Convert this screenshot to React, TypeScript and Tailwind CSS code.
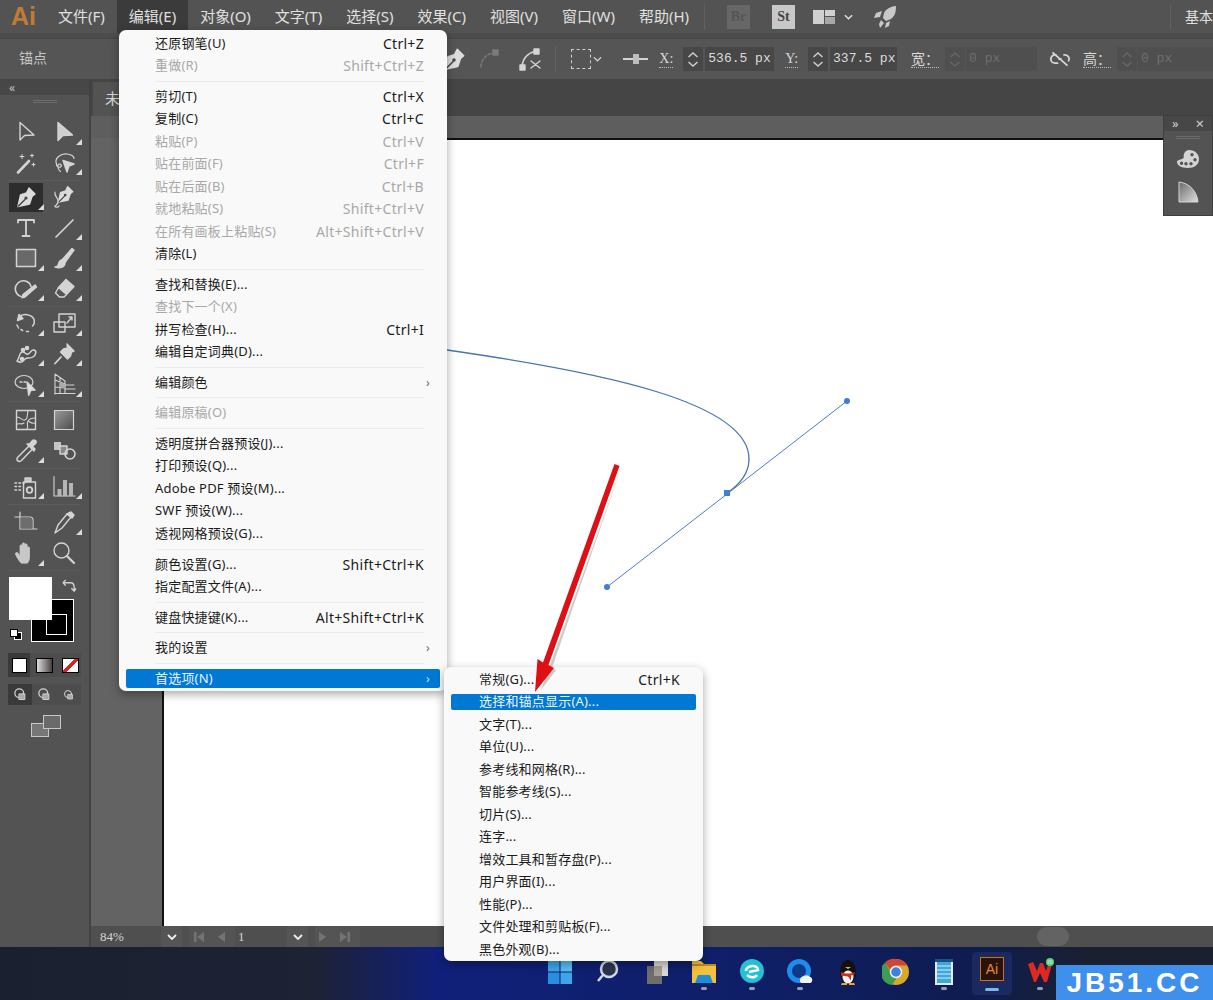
import { ReactNode } from "react";

const uiFont = "font-['Noto_Sans','Noto_Sans_CJK_SC',sans-serif]";

type MenuRow = { label: string; keys?: string; off?: boolean; more?: boolean; active?: boolean } | "sep";

const editMenu: MenuRow[] = [
  { label: "还原钢笔(U)", keys: "Ctrl+Z" },
  { label: "重做(R)", keys: "Shift+Ctrl+Z", off: true },
  "sep",
  { label: "剪切(T)", keys: "Ctrl+X" },
  { label: "复制(C)", keys: "Ctrl+C" },
  { label: "粘贴(P)", keys: "Ctrl+V", off: true },
  { label: "贴在前面(F)", keys: "Ctrl+F", off: true },
  { label: "贴在后面(B)", keys: "Ctrl+B", off: true },
  { label: "就地粘贴(S)", keys: "Shift+Ctrl+V", off: true },
  { label: "在所有画板上粘贴(S)", keys: "Alt+Shift+Ctrl+V", off: true },
  { label: "清除(L)" },
  "sep",
  { label: "查找和替换(E)..." },
  { label: "查找下一个(X)", off: true },
  { label: "拼写检查(H)...", keys: "Ctrl+I" },
  { label: "编辑自定词典(D)..." },
  "sep",
  { label: "编辑颜色", more: true },
  "sep",
  { label: "编辑原稿(O)", off: true },
  "sep",
  { label: "透明度拼合器预设(J)..." },
  { label: "打印预设(Q)..." },
  { label: "Adobe PDF 预设(M)..." },
  { label: "SWF 预设(W)..." },
  { label: "透视网格预设(G)..." },
  "sep",
  { label: "颜色设置(G)...", keys: "Shift+Ctrl+K" },
  { label: "指定配置文件(A)..." },
  "sep",
  { label: "键盘快捷键(K)...", keys: "Alt+Shift+Ctrl+K" },
  "sep",
  { label: "我的设置", more: true },
  "sep",
  { label: "首选项(N)", more: true, active: true },
];

const prefsMenu: MenuRow[] = [
  { label: "常规(G)...", keys: "Ctrl+K" },
  { label: "选择和锚点显示(A)...", active: true },
  { label: "文字(T)..." },
  { label: "单位(U)..." },
  { label: "参考线和网格(R)..." },
  { label: "智能参考线(S)..." },
  { label: "切片(S)..." },
  { label: "连字..." },
  { label: "增效工具和暂存盘(P)..." },
  { label: "用户界面(I)..." },
  { label: "性能(P)..." },
  { label: "文件处理和剪贴板(F)..." },
  { label: "黑色外观(B)..." },
];

const topMenu = ["文件(F)", "编辑(E)", "对象(O)", "文字(T)", "选择(S)", "效果(C)", "视图(V)", "窗口(W)", "帮助(H)"];

const Icon = ({ children, size = 24, className = "" }: { children: ReactNode; size?: number; className?: string }) => (
  <svg
    viewBox="0 0 24 24"
    width={size}
    height={size}
    fill="none"
    stroke="#d4d4d4"
    strokeWidth="1.4"
    strokeLinecap="round"
    strokeLinejoin="round"
    className={className}
  >
    {children}
  </svg>
);

const nib = (
  <>
    <path d="M15 3l6 6-3 2.5-2.5 7.5L4 21.5 6.5 10l6-2z" fill="#dcdcdc" stroke="#dcdcdc" />
    <path d="M4.5 21L11 14.5" stroke="#444" />
    <circle cx="12" cy="13" r="1.6" fill="#444" stroke="none" />
  </>
);

type Tool = { icon: ReactNode; more?: boolean; active?: boolean };

const toolGroups: Tool[][] = [
  [
    { icon: <path d="M6 2.5v17.5l4.5-4.5 9.5-.5z" /> },
    { icon: <path d="M6 2.5v18l5-5 9.5-.5z" fill="#cfcfcf" />, more: true },
    {
      icon: (
        <>
          <path d="M4 21.5L15 10" strokeWidth="2.6" />
          <path d="M8 3.5v4M6 5.500h4M18 3v3M16.500 4.500h3M19.500 12v3M18 13.500h3" strokeWidth="1.1" />
        </>
      ),
    },
    {
      icon: (
        <>
          <path d="M4.500 13C2 7 9 2.500 15 3c4 .3 7 2.500 7 4.500M4.500 13c-.5 3 3 4 4.500 2.500s-2-4-3-1c-.5 2 1 5 2.500 6" strokeWidth="1.2" />
          <path d="M11 9.500l11 3.500-5 2-2 6z" fill="#d4d4d4" />
        </>
      ),
      more: true,
    },
  ],
  [
    { icon: nib, more: true, active: true },
    {
      icon: (
        <>
          <g transform="translate(3 -1) scale(.85)">{nib}</g>
          <path d="M3 7c-1 5 3 5 3 9s-2 4-3 5 3 2 4 0" strokeWidth="1.2" />
        </>
      ),
    },
    { icon: <path d="M4 6.500V4h16v2.500M12 4v16M8.500 20h7" strokeWidth="1.8" />, more: false },
    { icon: <path d="M4 21L21 4" strokeWidth="1.7" />, more: true },
    { icon: <rect x="2.500" y="3.500" width="19" height="17" fill="#696969" strokeWidth="1.5" />, more: true },
    {
      icon: (
        <>
          <path d="M10 14L20 2.500l2 1.500-9 12.500z" fill="#d4d4d4" />
          <path d="M10 14c-3 0-3 3-4 5-.5 1.500-2 2-3 2 4 1.500 10 1 10-4.500z" fill="#d4d4d4" />
        </>
      ),
      more: true,
    },
    {
      icon: (
        <>
          <path d="M17 9.500A8 8 0 1 0 7 19.500" strokeWidth="1.6" />
          <path d="M9 17.500L21 8l1.500 2L11 20l-3 .8z" fill="#d4d4d4" />
        </>
      ),
      more: true,
    },
    {
      icon: (
        <>
          <path d="M14 2.500l8 7-7.500 8-8-7z" fill="#d4d4d4" />
          <path d="M6.500 10.500l8 7-2.500 2.500H7.500L3.500 16z" fill="#555" />
        </>
      ),
      more: true,
    },
  ],
  [
    {
      icon: (
        <>
          <path d="M5 6c4-4 13-3 15 2.500 .8 2.500 0 5-1.500 6.500" strokeWidth="1.5" />
          <path d="M3.500 9.500L5 3.500l4 4z" fill="#d4d4d4" />
          <path d="M3 14l1.500 3M7 18.500l2.500 1.500M12.500 20.500h3" strokeWidth="1.5" strokeDasharray="2 1" />
        </>
      ),
      more: true,
    },
    {
      icon: (
        <>
          <rect x="2" y="11" width="11" height="10" />
          <rect x="7" y="3" width="16" height="13" />
          <path d="M15 12l5-6M17 6h3v3" />
        </>
      ),
      more: true,
    },
    {
      icon: (
        <>
          <path d="M3 19c3-4 2-8 5-9s3 3 6 2 3-5 6-4 2 5-1 7-6 0-8 2-3 5-8 2z" strokeWidth="1.5" />
          <circle cx="9" cy="8" r="1.600" fill="#d4d4d4" />
          <circle cx="13" cy="6" r="1.600" fill="#d4d4d4" />
          <circle cx="8" cy="17" r="1.600" fill="#d4d4d4" />
        </>
      ),
      more: true,
    },
    {
      icon: (
        <>
          <path d="M15 2l7 7-2.500 1-1 4-3 3-7-7 3-3 4-1z" fill="#d4d4d4" />
          <path d="M9 15l-6 6.500" strokeWidth="1.8" />
        </>
      ),
      more: true,
    },
    {
      icon: (
        <>
          <ellipse cx="10" cy="10" rx="9" ry="6.500" strokeWidth="1.2" />
          <path d="M6 10h2M10 10h2" />
          <path d="M13 10l8 8-4 .3-2.300 5z" fill="#e0e0e0" />
        </>
      ),
      more: true,
    },
    {
      icon: (
        <>
          <path d="M3 2v20M3 2l10 7v12M3 8l10 4M3 15l10 1M8 5.500v16" strokeWidth="1.1" />
          <path d="M13 13h9M13 17h10M3 21.500h20" strokeWidth="1.1" />
          <path d="M8 10l5 2v4H8z" fill="#aaa" stroke="none" />
        </>
      ),
      more: true,
    },
  ],
  [
    {
      icon: (
        <>
          <rect x="2.500" y="2.500" width="19" height="19" />
          <path d="M3 9c4 0 5 4 8 3s2-6 3-9M21 10c-3 0-5 0-7 3s1 6-1 8M3 16c3-1 4 1 7-1M14 13c2 1 4 3 7 2" strokeWidth="1.1" />
        </>
      ),
    },
    {
      icon: (
        <>
          <defs>
            <linearGradient id="toolGrad" x1="0" y1="0" x2="1" y2="1">
              <stop offset="0" stopColor="#9a9a9a" />
              <stop offset="1" stopColor="#4c4c4c" />
            </linearGradient>
          </defs>
          <rect x="2.500" y="2.500" width="19" height="19" fill="url(#toolGrad)" strokeWidth="1.2" />
        </>
      ),
    },
    {
      icon: (
        <>
          <path d="M15 7L3.500 18.500c-1 1.200-.5 3 .5 3.500s2.500 .5 3.500-.5L18.500 10" strokeWidth="1.5" />
          <path d="M13 5l7 7 1-2-2.500-2.500L22 4c1-2-2-4-3.500-2.500L15.500 5z" fill="#d4d4d4" />
        </>
      ),
      more: true,
    },
    {
      icon: (
        <>
          <rect x="2" y="3" width="7" height="8" fill="#c4c4c4" stroke="none" />
          <rect x="8" y="7" width="7" height="8" fill="#888" />
          <circle cx="18" cy="15" r="5" strokeWidth="1.6" />
        </>
      ),
    },
  ],
  [
    {
      icon: (
        <>
          <path d="M1 8h1.500M5 8h1.500M1 11.500h1.500M5 11.500h1.500M1 15h1.500M5 15h1.500M9 8h1.500" strokeWidth="1.6" />
          <rect x="11" y="3" width="6" height="3.500" fill="#c4c4c4" />
          <rect x="9.500" y="7" width="12" height="16" />
          <circle cx="15.500" cy="15" r="2.800" strokeWidth="1.8" />
        </>
      ),
      more: true,
    },
    {
      icon: (
        <>
          <path d="M2 1.500V21h21" strokeWidth="1.1" />
          <rect x="5.500" y="14" width="4" height="7" fill="#b5b5b5" stroke="none" />
          <rect x="11" y="5" width="4" height="16" fill="#b5b5b5" stroke="none" />
          <rect x="17" y="8" width="4" height="13" fill="#b5b5b5" stroke="none" />
        </>
      ),
      more: true,
    },
  ],
  [
    {
      icon: (
        <>
          <path d="M6 1v17h17M1 6h15c2 0 3 1 3 3v9" strokeWidth="1.2" />
          <path d="M6.500 6.500H16c2 0 2.500 1 2.500 3v8h-12z" fill="#6d6d6d" stroke="none" />
        </>
      ),
    },
    {
      icon: (
        <>
          <path d="M15 3L6 14 3 22l7-5 9-11z" />
          <path d="M15 3l5 4 2-3-3-3z" fill="#d4d4d4" />
        </>
      ),
      more: true,
    },
    {
      icon: (
        <path
          d="M7 22c-2-2-5-7-5.500-9-.4-1.500 1.500-2 2.500-1l2 3V5c0-1.500 2.300-1.500 2.300 0v6V3c0-1.500 2.500-1.500 2.500 0v8V4c0-1.500 2.400-1.500 2.400 0v8-5c0-1.500 2.300-1.500 2.300 0v9c0 3-1 5-2 6z"
          fill="#c8c8c8"
          stroke="#c8c8c8"
          strokeWidth=".8"
        />
      ),
      more: true,
    },
    {
      icon: (
        <>
          <circle cx="9.500" cy="9.500" r="7.500" strokeWidth="1.4" />
          <path d="M15 15l7 7" strokeWidth="2.200" />
        </>
      ),
    },
  ],
];

const Corner = () => (
  <svg viewBox="0 0 6 6" className="absolute bottom-[3px] right-[1px] h-[6px] w-[6px]">
    <polygon points="6,0 6,6 0,6" fill="#dcdcdc" />
  </svg>
);

const ToolCell = ({ tool }: { tool: Tool }) => (
  <div className="relative flex h-[30.5px] items-center justify-center">
    {tool.active && <div className="absolute inset-x-[2px] inset-y-[1px] bg-[#2d2d2d]" />}
    <Icon className="relative">{tool.icon}</Icon>
    {tool.more && <Corner />}
  </div>
);

const Toolbar = () => (
  <div className="flex h-[867px] w-[91px] shrink-0 flex-col border-r-2 border-[#424242] bg-[#535353]">
    <div className="flex h-[15px] items-center bg-[#474747] pl-[9px] text-[12px] leading-none text-[#c0c0c0]">«</div>
    <div className="flex h-[22px] justify-center pt-[5px]">
      <div className="h-[3px] w-[24px] border-y border-[#6b6b6b]" />
    </div>
    {toolGroups.map((group, i) => (
      <div key={i}>
        <div className="grid grid-cols-[38px_38px] pl-[7px]">
          {group.map((tool, j) => (
            <ToolCell key={j} tool={tool} />
          ))}
        </div>
        <div className="mx-[8px] my-[1.5px] h-[1px] bg-[#5b5b5b]" />
        {i >= 2 && i <= 4 && <div className="h-[1.5px]" />}
      </div>
    ))}
    <div className="relative mt-[4.5px] h-[66px] shrink-0">
      <div className="absolute left-[31px] top-[22px] flex h-[43px] w-[43px] items-center justify-center border border-white bg-black">
        <div className="ml-[8px] mt-[8px] h-[21px] w-[21px] border border-white bg-black" />
      </div>
      <div className="absolute left-[9px] top-0 h-[43px] w-[43px] bg-white" />
      <svg viewBox="0 0 16 16" className="absolute left-[62px] top-[1px] h-[15px] w-[15px]" fill="none" stroke="#cfcfcf" strokeWidth="1.5">
        <path d="M2 5h7c3 0 4 2 4 5v3M1 5l3-3M1 5l3 3M10 11l3 3 2-3" />
      </svg>
      <div className="absolute left-[14px] top-[55px] h-[8px] w-[8px] border border-white bg-black" />
      <div className="absolute left-[10px] top-[52px] h-[8px] w-[8px] border border-black bg-white" />
    </div>
    <div className="mx-[8px] mt-[10px] flex h-[24px] items-center bg-[#4d4d4d]">
      <div className="flex h-[24px] w-[22px] items-center justify-center bg-[#3a3a3a]">
        <div className="h-[15px] w-[15px] border border-black bg-white" />
      </div>
      <div className="ml-[6px] h-[15px] w-[17px] border border-black bg-[linear-gradient(90deg,#ddd,#4a3f3f)]" />
      <div className="ml-[9px] h-[15px] w-[17px] border border-black bg-[linear-gradient(135deg,#fff_42%,#d22_42%,#d22_58%,#fff_58%)]" />
    </div>
    <div className="mx-[8px] mt-[7px] flex h-[21px] items-center bg-[#4d4d4d]">
      {[0, 1, 2].map((n) => (
        <div key={n} className={`flex h-[21px] w-[25px] items-center justify-center ${n === 0 ? "bg-[#3a3a3a]" : ""}`}>
          <Icon size={n === 2 ? 12 : 15}>
            <circle cx="10" cy="10" r="7" strokeWidth="2" />
            <rect x="10" y="11" width="9" height="9" fill="#aaa" strokeWidth="1.500" />
          </Icon>
        </div>
      ))}
    </div>
    <div className="relative ml-[31px] mt-[10px] h-[22px] w-[30px]">
      <div className="absolute bottom-0 left-0 h-[14px] w-[18px] border border-[#c8c8c8] bg-[#777]" />
      <div className="absolute right-0 top-0 h-[14px] w-[18px] border border-[#c8c8c8] bg-[#6a6a6a]" />
    </div>
  </div>
);

const Row = ({ row, highlight }: { row: Exclude<MenuRow, "sep">; highlight: string }) => (
  <div className={`relative flex h-[22.5px] items-center justify-between text-[13px] tracking-[0.2px] ${row.off ? "text-[#a8a8a8]" : "text-[#1b1b1b]"}`}>
    {row.active && <div className={`absolute rounded-[2px] bg-[#0078d4] ${highlight}`} />}
    <span className={`relative ${row.active ? "text-[#eaf3fb]" : ""}`}>{row.label}</span>
    {row.keys && <span className="relative text-[14px] tracking-[0.3px]">{row.keys}</span>}
    {row.more && <span className={`relative -mr-[6px] text-[12px] ${row.active ? "text-[#cde3f5]" : "text-[#666]"}`}>›</span>}
  </div>
);

const Menu = ({ rows, className, highlight }: { rows: MenuRow[]; className: string; highlight: string }) => (
  <div className={`absolute rounded-[7px] bg-[#f9f9f9] shadow-[0_3px_10px_rgba(0,0,0,0.35)] ${uiFont} ${className}`}>
    {rows.map((row, i) =>
      row === "sep" ? (
        <div key={i} className="flex h-[8.1px] items-center">
          <div className="-mr-[16px] h-[1px] w-full bg-[#ececec]" />
        </div>
      ) : (
        <Row key={i} row={row} highlight={highlight} />
      ),
    )}
  </div>
);

const Spinner = ({ dim = false }: { dim?: boolean }) => (
  <div className={`flex h-[24px] w-[20px] flex-col items-center justify-center gap-[3px] ${dim ? "bg-[#4f4f4f]" : "bg-[#474747]"}`}>
    <svg viewBox="0 0 12 6" className="h-[6px] w-[12px]" fill="none" stroke={dim ? "#666" : "#d0d0d0"} strokeWidth="1.4">
      <path d="M1.500 5L6 1l4.500 4" />
    </svg>
    <svg viewBox="0 0 12 6" className="h-[6px] w-[12px]" fill="none" stroke={dim ? "#666" : "#d0d0d0"} strokeWidth="1.4">
      <path d="M1.500 1L6 5l4.500-4" />
    </svg>
  </div>
);

const Field = ({ label, value, w }: { label: string; value: string; w: string }) => (
  <div className="flex items-center">
    <span className="mr-[10px] border-b border-dotted border-[#bdbdbd] font-['Liberation_Serif','Noto_Sans_CJK_SC',serif] text-[14px] leading-[16px] text-[#d8d8d8]">
      {label}
    </span>
    <Spinner />
    <div className={`ml-[2px] flex h-[24px] items-center bg-[#474747] pl-[3px] font-['Liberation_Mono',monospace] text-[13px] text-[#dcdcdc] ${w}`}>
      {value}
    </div>
  </div>
);

const DimField = ({ label, w }: { label: string; w: string }) => (
  <div className="flex items-center">
    <span className="mr-[6px] border-b border-dotted border-[#bdbdbd] font-['Noto_Sans_CJK_SC',serif] text-[14px] leading-[17px] text-[#d8d8d8]">
      {label}
    </span>
    <Spinner dim />
    <div className={`ml-[1px] flex h-[24px] items-center bg-[#4f4f4f] pl-[3px] font-['Liberation_Mono',monospace] text-[13px] text-[#6e6e6e] ${w}`}>
      0 px
    </div>
  </div>
);

const MenuBar = () => (
  <div className={`flex h-[33px] items-center bg-[#535353] text-[15px] text-[#e0e0e0] ${uiFont}`}>
    <div className="w-[46px] pl-[11px] font-['Liberation_Sans',sans-serif] text-[25px] font-bold leading-none text-[#c27a35]">Ai</div>
    <div className="flex h-full">
      {topMenu.map((name) => (
        <div key={name} className={`flex w-fit items-center px-[12px] ${name === "编辑(E)" ? "bg-[#3b3b3b]" : ""}`}>
          {name}
        </div>
      ))}
    </div>
    <div className="ml-[3px] h-[26px] w-[1px] bg-[#606060]" />
    <div className="ml-[22px] flex h-[24px] w-[23px] items-center justify-center bg-[#676767] font-['Liberation_Serif',serif] text-[14px] font-bold text-[#555]">
      Br
    </div>
    <div className="ml-[22px] flex h-[24px] w-[23px] items-center justify-center bg-[#c8c8c8] font-['Liberation_Serif',serif] text-[14px] font-bold text-[#444]">
      St
    </div>
    <div className="ml-[18px] grid h-[14px] w-[22px] grid-cols-2 gap-[1px]">
      <div className="row-span-2 bg-[#d0d0d0]" />
      <div className="bg-[#d0d0d0]" />
      <div className="bg-[#a8a8a8]" />
    </div>
    <svg viewBox="0 0 10 6" className="ml-[9px] h-[6px] w-[9px]" fill="none" stroke="#e0e0e0" strokeWidth="1.600">
      <path d="M1 1l4 4 4-4" />
    </svg>
    <svg viewBox="0 0 24 24" className="ml-[20px] h-[26px] w-[24px]" fill="#c8c8c8">
      <path d="M23 1c-6 .5-10 3-12 7l-1 5 3 3 5-2c4-3 5-7 5-13zM9 6L3 8l-2 5 6-1zM17 16l-1 5-4 2 1-5zM8 15l3 3-4 5-1-4z" />
    </svg>
    <div className="ml-auto mr-[14px] h-[26px] w-[1px] bg-[#606060]" />
    <div className="w-[28px] whitespace-nowrap text-[14px]">基本</div>
  </div>
);

const ControlBar = () => (
  <div className="flex h-[42px] items-center border-y border-[#454545] bg-[#555555]">
    <div className={`w-[442px] pb-[4px] pl-[19px] text-[14px] text-[#c6c6c6] ${uiFont}`}>锚点</div>
    <Icon size={26}>{nib}</Icon>
    <Icon size={24} className="ml-[10px] opacity-30">
      <path d="M4 20c0-8 6-14 14-14" strokeDasharray="3 2" />
      <rect x="16" y="3" width="5" height="5" fill="#d4d4d4" />
    </Icon>
    <Icon size={24} className="ml-[18px]">
      <path d="M3 19C4 11 9 6 17 4" strokeWidth="1.500" />
      <rect x="15" y="2" width="5" height="5" fill="#d4d4d4" />
      <rect x="1" y="18" width="5" height="5" fill="#d4d4d4" />
      <path d="M12 14l9 7M21 14l-9 7" />
    </Icon>
    <div className="ml-[12px] h-[26px] w-[1px] bg-[#616161]" />
    <div className="ml-[15px] h-[20px] w-[20px] border border-dashed border-[#cfcfcf]" />
    <svg viewBox="0 0 10 6" className="ml-[2px] h-[6px] w-[9px]" fill="none" stroke="#d0d0d0" strokeWidth="1.400">
      <path d="M1 1l4 4 4-4" />
    </svg>
    <div className="relative ml-[21px] h-[2px] w-[25px] bg-[#d4d4d4]">
      <div className="absolute left-[10px] top-[-4px] h-[10px] w-[6px] bg-[#bdbdbd]" />
    </div>
    <div className="ml-[11px] flex gap-[11px]">
      <Field label="X:" value="536.5 px" w="w-[69px]" />
      <Field label="Y:" value="337.5 px" w="w-[67px]" />
    </div>
    <div className="ml-[14px]">
      <DimField label="宽：" w="w-[71px]" />
    </div>
    <svg viewBox="0 0 24 24" className="ml-[12px] h-[20px] w-[22px]" fill="none" stroke="#d6d6d6" strokeWidth="2.200">
      <path d="M3 4l18 16M8 7H6a5 5 0 0 0 0 10h4M16 7h2a5 5 0 0 1 4 8M10 12h4" />
    </svg>
    <div className="ml-[12px]">
      <DimField label="高：" w="w-[75px]" />
    </div>
  </div>
);

const StatusBar = () => (
  <div className="flex h-[21px] items-center bg-[#4f4f4f] pl-[9px] font-['Liberation_Serif',serif] text-[13px] text-[#d4d4d4]">
    <div className="w-[61px]">84%</div>
    <div className="flex h-full w-[21px] items-center justify-center bg-[#555]">
      <svg viewBox="0 0 10 6" className="h-[6px] w-[10px]" fill="none" stroke="#eee" strokeWidth="1.800">
        <path d="M1 1l4 4 4-4" />
      </svg>
    </div>
    <div className="ml-[7px] flex h-full w-[46px] items-center gap-[12px] bg-[#545454] pl-[4px]">
      <svg viewBox="0 0 12 12" className="h-[12px] w-[12px]" fill="#737373">
        <path d="M1 1h2.500v10H1zM11 1v10L4 6z" />
      </svg>
      <svg viewBox="0 0 8 12" className="h-[12px] w-[8px]" fill="#737373">
        <path d="M8 1v10L1 6z" />
      </svg>
    </div>
    <div className="w-[52px] pl-[3px]">1</div>
    <div className="flex h-full w-[21px] items-center justify-center bg-[#555]">
      <svg viewBox="0 0 10 6" className="h-[6px] w-[10px]" fill="none" stroke="#eee" strokeWidth="1.800">
        <path d="M1 1l4 4 4-4" />
      </svg>
    </div>
    <div className="ml-[7px] flex h-full w-[45px] items-center gap-[12px] bg-[#545454] pl-[4px]">
      <svg viewBox="0 0 8 12" className="h-[12px] w-[8px]" fill="#737373">
        <path d="M0 1v10l7-5z" />
      </svg>
      <svg viewBox="0 0 12 12" className="h-[12px] w-[12px]" fill="#737373">
        <path d="M1 1v10l7-5zM8.500 1H11v10H8.500z" />
      </svg>
    </div>
    <div className="ml-[677px] h-[19px] w-[32px] rounded-[10px] bg-[#636363]" />
  </div>
);

const Canvas = () => (
  <div className="relative flex-1 border-l-2 border-t-2 border-[#111] bg-white">
    <svg viewBox="163 139 1050 787" className="absolute left-[-1px] top-[-1px] h-[787px] w-[1050px]" fill="none">
      <path d="M447 350C600 372 751 402 749 460C748.500 475 739 485 727 493" stroke="#4a74ad" strokeWidth="1.300" />
      <path d="M847 401L607 587" stroke="#4a7fc0" strokeWidth="1" />
      <circle cx="847" cy="401" r="3" fill="#3f7fd0" />
      <circle cx="607" cy="587" r="3" fill="#3f7fd0" />
      <rect x="724" y="490" width="6" height="6" fill="#3f7fd0" />
    </svg>
  </div>
);

const Dot = () => <div className="mx-auto mt-[1px] h-[3px] w-[6px] rounded-full bg-[#8fa3c0]" />;

const TaskIcon = ({ children, dot = true }: { children: ReactNode; dot?: boolean }) => (
  <div className="flex w-[48px] flex-col items-center">
    <svg viewBox="0 0 28 28" className="h-[28px] w-[28px]">
      {children}
    </svg>
    {dot ? <Dot /> : <div className="h-[4px]" />}
  </div>
);

const Taskbar = () => (
  <div className="flex h-[53px] justify-start bg-[linear-gradient(90deg,#1b2030_0%,#1d2235_26%,#10207a_36%,#0f1f68_60%,#0e1c50_80%,#1a2030_90%)] pl-[536px] pt-[11px]">
    <TaskIcon dot={false}>
      <rect x="2" y="2" width="11.500" height="11.500" fill="#3fa4ea" />
      <rect x="14.500" y="2" width="11.500" height="11.500" fill="#57bdf2" />
      <rect x="2" y="14.500" width="11.500" height="11.500" fill="#2a8ede" />
      <rect x="14.500" y="14.500" width="11.500" height="11.500" fill="#3fa4ea" />
    </TaskIcon>
    <TaskIcon dot={false}>
      <circle cx="15" cy="11" r="8" fill="#2b3350" stroke="#cfd6e4" strokeWidth="2.500" />
      <path d="M9 17l-5 6" stroke="#cfd6e4" strokeWidth="2.500" />
    </TaskIcon>
    <TaskIcon dot={false}>
      <rect x="12" y="0" width="14" height="18" fill="#d8d8d8" />
      <rect x="5" y="8" width="15" height="18" fill="#6e6e6e" />
      <rect x="12" y="8" width="8" height="10" fill="#a89d94" />
    </TaskIcon>
    <TaskIcon>
      <path d="M2 3h9l3 3h12v19H2z" fill="#f3c13e" />
      <rect x="2" y="6" width="24" height="2" fill="#c48a1c" />
      <path d="M8 17h12l3 8H5z" fill="#1c8fd8" />
    </TaskIcon>
    <TaskIcon>
      <circle cx="14" cy="13" r="12" fill="#25c0d8" />
      <path d="M8 13c0-6 12-7 12-1l-9 2M9 17c3 3 8 3 10 0" fill="none" stroke="#fff" strokeWidth="2.500" />
    </TaskIcon>
    <TaskIcon>
      <circle cx="13" cy="13" r="9.500" fill="#103a86" stroke="#1e8cec" strokeWidth="5" />
      <path d="M14 23c-1-5 8-7 10-4 3 0 3 6 0 6H16c-2 0-2-2-2-2z" fill="#f0f2f6" />
    </TaskIcon>
    <TaskIcon dot={false}>
      <ellipse cx="14" cy="14" rx="8" ry="12" fill="#111" />
      <ellipse cx="14" cy="19" rx="5.500" ry="6.500" fill="#f4f4f4" />
      <path d="M7 14c4 2 10 2 14 0l-1 3-3 .5 0 5-3-4-7-1z" fill="#d8281c" />
      <path d="M11 9h6l-3 2z" fill="#f2b41c" />
      <path d="M8 25h5v2H7zM15 25h5l1 2h-6z" fill="#f2a81c" />
    </TaskIcon>
    <TaskIcon dot={false}>
      <circle cx="14" cy="14" r="13" fill="#d9a72a" />
      <path d="M14 1a13 13 0 0 1 11.300 6.500H14a6.500 6.500 0 0 0-6 4L3 4.500A13 13 0 0 1 14 1z" fill="#d0443a" />
      <path d="M3 4.500l5.600 9.500a6.500 6.500 0 0 0 5.800 6.500L10 27A13 13 0 0 1 3 4.500z" fill="#3f9c54" />
      <circle cx="14" cy="14" r="5.500" fill="#3f7fe0" stroke="#eee" strokeWidth="1.500" />
    </TaskIcon>
    <TaskIcon>
      <rect x="5" y="1" width="18" height="26" fill="#e6eaee" />
      <rect x="7" y="4" width="14" height="21" fill="#3ea7dc" />
      <path d="M7 8h14M7 12h14M7 16h14M7 20h14" stroke="#d6f0fb" strokeWidth="1.200" />
      <rect x="5" y="1" width="18" height="3" fill="#1e4f82" />
    </TaskIcon>
    <div className="mx-[4px] -mt-[6px] flex h-[43px] w-[40px] shrink-0 flex-col items-center rounded-[4px] bg-[#1a2a5e] pt-[5px]">
      <div className="flex h-[24px] w-[24px] items-center justify-center border border-[#c8701a] bg-[#2a1408] font-['Liberation_Sans',sans-serif] text-[14px] leading-none text-[#e58a2a]">
        Ai
      </div>
      <div className="mt-[7px] h-[3px] w-[14px] rounded-full bg-[#7fb4ee]" />
    </div>
    <TaskIcon>
      <path d="M2 6l5-2 4 9 3-8h3l3 8 3-9 3 2-5 18h-3l-4-9-4 9H8z" fill="#dc2a22" />
      <circle cx="24" cy="4" r="4" fill="#5fd07a" />
      <path d="M21.500 3h5M21.500 5h5" stroke="#d8f5de" strokeWidth=".8" />
    </TaskIcon>
  </div>
);

const App = () => (
  <div className="relative h-[1000px] w-[1213px] overflow-hidden bg-[#535353]">
    <MenuBar />
    <div className="h-[5px] bg-[#4c4c4c]" />
    <ControlBar />
    <div className="flex h-[867px]">
      <Toolbar />
      <div className="flex min-w-0 flex-1 flex-col">
        <div className="h-[36px] bg-[#454545] pl-[2px] pt-[2px]">
          <div className={`h-[34px] w-[120px] bg-[#535353] pl-[12px] pt-[5px] text-[15px] text-[#d6d6d6] ${uiFont}`}>未标题</div>
        </div>
        <div className="h-[22px] bg-[#5e5e5e]" />
        <div className="flex flex-1">
          <div className="w-[71px] bg-[#636363]" />
          <Canvas />
        </div>
        <StatusBar />
      </div>
    </div>
    <Taskbar />

    <Menu rows={editMenu} className="left-[119px] top-[30px] h-[661px] w-[328px] pl-[36px] pr-[23px] pt-[2px]" highlight="-left-[29px] -right-[16px] inset-y-[2px]" />
    <Menu rows={prefsMenu} className="left-[444px] top-[667px] h-[294px] w-[259px] pl-[35px] pr-[23px] pt-[1px]" highlight="-left-[28px] -right-[16px] inset-y-[3px]" />

    <div className="absolute left-[1163px] top-[115px] h-[101px] w-[50px] border border-[#3e3e3e] bg-[#535353]">
      <div className="flex h-[15px] items-center justify-between bg-[#474747] px-[8px] leading-none text-[#cfcfcf]">
        <span className="text-[13px]">»</span>
        <span className="text-[15px]">×</span>
      </div>
      <div className="mx-auto mt-[5px] h-[3px] w-[24px] border-y border-[#6b6b6b]" />
      <div className="mt-[8px] flex justify-center">
        <svg viewBox="0 0 24 24" className="h-[24px] w-[24px]" fill="#d4d4d4">
          <path fillRule="evenodd" d="M13 3c6 0 10 4 10 9 0 6-5 9-11 9-7 0-11-3-11-6 0-2 3-2 5-3 3-1 1-3 2-5 1-3 3-4 5-4zM16 6a1.700 1.700 0 1 0 0 3.400A1.700 1.700 0 0 0 16 6zM19 11a1.700 1.700 0 1 0 0 3.400A1.700 1.700 0 0 0 19 11zM15 15a1.700 1.700 0 1 0 0 3.400A1.700 1.700 0 0 0 15 15zM10 15a1.700 1.700 0 1 0 0 3.400A1.700 1.700 0 0 0 10 15zM5.500 14.500a1.700 1.700 0 1 0 0 3.400 1.700 1.700 0 0 0 0-3.400z" />
        </svg>
      </div>
      <div className="mt-[9px] flex justify-center">
        <svg viewBox="0 0 24 24" className="h-[24px] w-[24px]">
          <defs>
            <linearGradient id="panelGrad" x1="0" y1="0" x2="1" y2="1">
              <stop offset="0" stopColor="#6a6a6a" />
              <stop offset="1" stopColor="#e0e0e0" />
            </linearGradient>
          </defs>
          <path d="M3 2c10 1 18 9 19 20H3z" fill="url(#panelGrad)" stroke="#d4d4d4" strokeWidth="1" />
        </svg>
      </div>
    </div>

    <svg viewBox="0 0 1213 1000" className="pointer-events-none absolute left-0 top-0 h-[1000px] w-[1213px]">
      <path d="M622 466L552 668L556 670L541 690Z" fill="#4a5a50" opacity="0.3" />
      <path d="M614.500 464L619.500 466L548.500 665L554 668L535 692L537.500 659L543 662.500Z" fill="#de1016" />
    </svg>

    <div className="absolute bottom-0 right-0 flex h-[35px] w-[157px] items-center justify-center bg-[#3f8fec] font-['Liberation_Sans',sans-serif] text-[28px] font-bold tracking-[3px] text-white">
      JB51.CC
    </div>
  </div>
);

export default App;
